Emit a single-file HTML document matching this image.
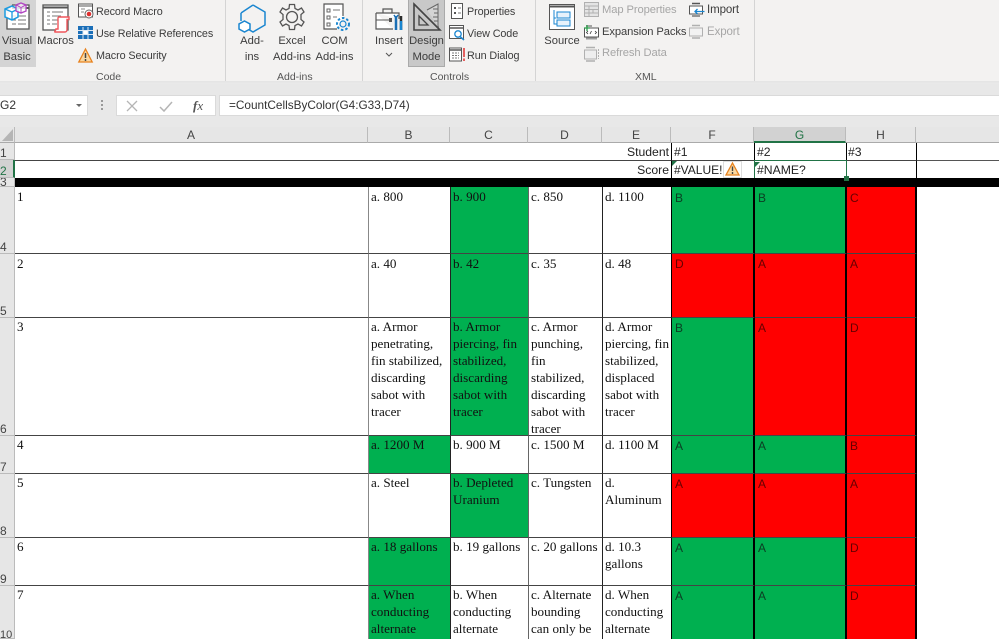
<!DOCTYPE html>
<html><head><meta charset="utf-8">
<style>
html,body{margin:0;padding:0;width:999px;height:639px;overflow:hidden;background:#fff}
body{position:relative;font-family:"Liberation Sans",sans-serif;color:#333}
.a{position:absolute;white-space:nowrap}
.rb{font-size:11.2px;line-height:15px;color:#3c3c3c;text-align:center;position:absolute;white-space:nowrap}
.sm{font-size:10.8px;letter-spacing:-.1px;line-height:14px;color:#3c3c3c;position:absolute;white-space:nowrap}
.dis{color:#a6a6a6}
.gl{font-size:10.5px;color:#555;position:absolute;line-height:13px;white-space:nowrap}
.sep{position:absolute;top:0;width:1px;height:81px;background:#d4d4d4}
.c{position:absolute;box-sizing:border-box;font-family:"Liberation Serif",serif;font-size:13.1px;line-height:17px;color:#111;padding:0 0 0 2px;overflow:hidden;white-space:pre;border-right:1px solid #222;border-bottom:1px solid #444}
.t{padding-top:1px}
.ca{border-right-color:#888}
.cc{border-right-color:#666}
.s{position:absolute;box-sizing:border-box;font-family:"Liberation Sans",sans-serif;font-size:12px;line-height:14px;padding:3px 0 0 3px;overflow:hidden;border-right:2px solid #000;border-bottom:1px solid #444;color:#0b3d22}
.g{background:#00b050}
.r{background:#f00;color:#660000}
.hd{position:absolute;top:127px;height:16px;background:#e6e6e6;border-right:1px solid #bbb;box-sizing:border-box;text-align:center;font-size:12px;line-height:17px;color:#444;border-bottom:1px solid #aaa}
.rh{position:absolute;left:0;width:15px;background:#e6e6e6;box-sizing:border-box;border-bottom:1px solid #bbb;font-size:12px;color:#444;overflow:hidden;border-right:1px solid #bbb}
.rh span{position:absolute;left:0;bottom:-1px;line-height:14px}
.sc{position:absolute;box-sizing:border-box;font-size:12.2px;line-height:16px;color:#222;border-bottom:1px solid #444;border-right:1px solid #000;height:18px;padding:1px 2px 0 2px;white-space:nowrap}
svg{position:absolute;overflow:visible}
</style></head><body>

<!-- ribbon -->
<div class="a" style="left:0;top:0;width:999px;height:84px;background:#f3f2f1"></div>
<div class="a" style="left:0;top:81px;width:999px;height:4px;background:linear-gradient(#e4e4e4,#ececec)"></div>
<div class="a" style="left:0;top:84px;width:999px;height:43px;background:#e8e8e8"></div>
<div class="a" style="left:0;top:0;width:36px;height:67px;background:#d4d4d4"></div>
<div class="a" style="left:408px;top:0;width:37px;height:67px;background:#c8c8c8;border:1px solid #aaa;box-sizing:border-box;border-top:0"></div>
<div class="sep" style="left:225px"></div>
<div class="sep" style="left:362px"></div>
<div class="sep" style="left:535px"></div>
<div class="sep" style="left:754px"></div>

<!-- Visual Basic icon -->
<svg style="left:2px;top:2px" width="30" height="30" viewBox="0 0 30 30">
<path d="M10 3H27V27H5V16" fill="#fff" stroke="#555" stroke-width="1.3"/><path d="M10 6H27" stroke="#555" stroke-width="2"/>
<path d="M10 14H14M16 14H24M10 18H14M16 18H24M10 22H14M16 22H24" stroke="#777"/>
<path d="M3 7L10 4L16 7V15L10 18L3 15Z" fill="#fff" fill-opacity=".8" stroke="#1d9be0" stroke-width="1.5"/><path d="M3 7L10 10L16 7M10 10V18" fill="none" stroke="#1d9be0" stroke-width="1.3"/>
<path d="M14 3L19 1L24 3V9L19 11L14 9Z" fill="#fff" fill-opacity=".8" stroke="#b146c2" stroke-width="1.3"/><path d="M14 3L19 5.5L24 3M19 5.5V11" fill="none" stroke="#b146c2"/>
</svg>
<div class="rb" style="left:0;top:34px;width:34px;">Visual<br><span style="line-height:16px">Basic</span></div>
<!-- Macros icon -->
<svg style="left:41px;top:3px" width="30" height="30" viewBox="0 0 30 30">
<rect x="2" y="2" width="25" height="25" fill="#fff" stroke="#555" stroke-width="1.3"/><path d="M2 4.500H27" stroke="#555" stroke-width="2"/>
<path d="M6 9H9M11 9H22M6 13H9M11 13H20M6 17H9M11 17H18M6 21H9M11 21H16" stroke="#777"/>
<path d="M18 14H28V16.500H26V27C26 28 25 29 24 29H14C13 29 15 27 15 26H17V15C17 14.500 17.500 14 18 14Z" fill="#fff" stroke="#f0565b" stroke-width="1.4"/>
</svg>
<div class="rb" style="left:37px;top:34px;width:37px">Macros</div>
<!-- Code small icons -->
<svg style="left:78px;top:3px" width="16" height="16" viewBox="0 0 16 16"><rect x=".5" y="1" width="14" height="13" fill="#fff" stroke="#555"/><path d="M.5 3H14.500" stroke="#555"/><path d="M3 6H7M3 9H6" stroke="#888"/><circle cx="11" cy="11" r="4" fill="#fff" stroke="#666"/><circle cx="11" cy="11" r="2.300" fill="#e03030"/></svg>
<svg style="left:78px;top:26px" width="15" height="14" viewBox="0 0 15 14"><rect width="15" height="13" fill="#1b6fb8"/><path d="M5 1V13M10 1V13M0 4.500H15M0 8.500H15" stroke="#dfe9f3"/><rect x="5.500" y="5" width="4" height="3" fill="#fff"/></svg>
<svg style="left:78px;top:48px" width="15" height="15" viewBox="0 0 15 15"><path d="M7.500 1L14.200 14H.8Z" fill="#fad7a0" stroke="#e8821e" stroke-width="1.300"/><path d="M7.500 5V10M7.500 11V13" stroke="#444" stroke-width="1.500"/></svg>
<div class="sm" style="left:96px;top:5px">Record Macro</div>
<div class="sm" style="left:96px;top:27px;">Use Relative References</div>
<div class="sm" style="left:96px;top:49px">Macro Security</div>
<div class="gl" style="left:96px;top:71px">Code</div>

<!-- Add-ins -->
<svg style="left:237px;top:3px" width="30" height="30" viewBox="0 0 30 30"><path d="M16 2L28 9V22L16 29L10 25.500" fill="none" stroke="#1a86d0" stroke-width="1.500"/><path d="M4 10L16 2M4 10V18" fill="none" stroke="#1a86d0" stroke-width="1.500"/><path d="M7.500 18L13 21V26L7.500 29L2 26V21Z" fill="#fff" stroke="#1a86d0" stroke-width="1.500"/></svg>
<div class="rb" style="left:235px;top:34px;width:34px">Add-<br><span style="line-height:16px">ins</span></div>
<svg style="left:278px;top:3px" width="28" height="28" viewBox="0 0 28 28"><circle cx="14" cy="14" r="5.500" fill="none" stroke="#555" stroke-width="1.300"/><path d="M11.500 1.500H16.500L17 5.500L20 7L23.500 5L26 9L23 11.500V16.500L26 19L23.500 23L20 21L17 22.500L16.500 26.500H11.500L11 22.500L8 21L4.500 23L2 19L5 16.500V11.500L2 9L4.500 5L8 7L11 5.500Z" fill="none" stroke="#555" stroke-width="1.300"/></svg>
<div class="rb" style="left:272px;top:34px;width:40px">Excel<br><span style="line-height:16px">Add-ins</span></div>
<svg style="left:323px;top:3px" width="28" height="30" viewBox="0 0 28 30"><path d="M14 26H1V1H20V13" fill="#fff" stroke="#555" stroke-width="1.200"/><path d="M4 6h3v3h-3zM4 13h3v3h-3zM4 20h3v3h-3z" fill="none" stroke="#666"/><path d="M10 7H17M10 14H14" stroke="#777"/><circle cx="20" cy="21" r="3" fill="none" stroke="#1a86d0" stroke-width="1.200"/><circle cx="20" cy="21" r="6" fill="none" stroke="#1a86d0" stroke-width="2" stroke-dasharray="2.500 2"/></svg>
<div class="rb" style="left:314px;top:34px;width:41px">COM<br><span style="line-height:16px">Add-ins</span></div>
<div class="gl" style="left:277px;top:71px">Add-ins</div>

<!-- Controls -->
<svg style="left:375px;top:6px" width="28" height="26" viewBox="0 0 28 26"><path d="M1 7H24V13M1 7V23H18" fill="#fff" stroke="#555" stroke-width="1.200"/><path d="M8 7V3H17V7" fill="none" stroke="#555" stroke-width="1.200"/><path d="M1 14H14" stroke="#555"/><rect x="14" y="12" width="3" height="4" fill="#555"/><path d="M21 10V24" stroke="#1a6fb5" stroke-width="2.500"/><path d="M19 9L21 12L23 9" fill="none" stroke="#1a6fb5" stroke-width="1.500"/><path d="M26 10V24" stroke="#2b2b2b" stroke-width="2.500"/><path d="M26 15V24" stroke="#1a86d0" stroke-width="2.500"/></svg>
<div class="rb" style="left:371px;top:34px;width:36px">Insert</div>
<svg style="left:385px;top:52px" width="8" height="5" viewBox="0 0 8 5"><path d="M1 1L4 4L7 1" fill="none" stroke="#555"/></svg>
<svg style="left:413px;top:3px" width="28" height="28" viewBox="0 0 28 28"><path d="M1 1L27 27H1Z" fill="none" stroke="#444" stroke-width="1.600"/><path d="M6 13L15 22H6Z" fill="none" stroke="#444" stroke-width="1.300"/><path d="M14 7L25 1V24H26" fill="#d4d4d4" stroke="#666"/><path d="M20 6H25M21 10H25M20 14H25M21 18H25" stroke="#666"/></svg>
<div class="rb" style="left:408px;top:34px;width:37px">Design<br><span style="line-height:16px">Mode</span></div>
<svg style="left:451px;top:3px" width="13" height="16" viewBox="0 0 13 16"><rect x=".5" y=".5" width="11" height="15" fill="#fff" stroke="#555"/><path d="M3 4h2v2h-2zM3 9h2v2h-2z" fill="#555"/><path d="M7 5H10M7 10H10" stroke="#777"/></svg>
<svg style="left:449px;top:25px" width="16" height="16" viewBox="0 0 16 16"><rect x=".5" y=".5" width="14" height="13" fill="#fff" stroke="#555"/><path d="M.5 3H14.500" stroke="#555" stroke-width="1.500"/><circle cx="9" cy="9" r="3.200" fill="#fff" stroke="#1a86d0" stroke-width="1.300"/><path d="M11 11.500L15 15" stroke="#1a86d0" stroke-width="1.500"/></svg>
<svg style="left:449px;top:47px" width="16" height="16" viewBox="0 0 16 16"><rect x=".5" y="1" width="12" height="13" fill="#fff" stroke="#555"/><path d="M.5 3H12.500" stroke="#555" stroke-width="1.500"/><path d="M3 6H10M3 8.500H10M3 11H10" stroke="#777" stroke-dasharray="2 1"/><path d="M15 1V10M15 11.500V14" stroke="#e03030" stroke-width="1.500"/></svg>
<div class="sm" style="left:467px;top:5px">Properties</div>
<div class="sm" style="left:467px;top:27px">View Code</div>
<div class="sm" style="left:467px;top:49px">Run Dialog</div>
<div class="gl" style="left:430px;top:71px">Controls</div>

<!-- XML -->
<svg style="left:549px;top:4px" width="27" height="27" viewBox="0 0 27 27"><rect x=".5" y=".5" width="25" height="25" fill="#fff" stroke="#555"/><path d="M.5 2.500H25.500" stroke="#555" stroke-width="2"/><path d="M5 6V14H7M5 14V20H8" fill="none" stroke="#1a86d0"/><rect x="8" y="8" width="13" height="6" fill="#e7f2fb" stroke="#1a86d0"/><rect x="8" y="16" width="13" height="6" fill="#e7f2fb" stroke="#1a86d0"/></svg>
<div class="rb" style="left:543px;top:34px;width:38px">Source</div>
<svg style="left:584px;top:2px" width="15" height="15" viewBox="0 0 15 15"><rect x=".5" y=".5" width="14" height="14" fill="#e4e4e4" stroke="#b0b0b0"/><path d="M.5 4H14.500M.5 7.500H14.500M.5 11H14.500M5 4V15M9 7V11" stroke="#b0b0b0"/></svg>
<svg style="left:584px;top:24px" width="15" height="16" viewBox="0 0 15 16"><rect x=".5" y="4" width="14" height="9" fill="#fff" stroke="#555"/><path d="M2 2H8" stroke="#555"/><path d="M3 1V7M0 4H6" stroke="#2a9d4a" stroke-width="1.300"/><path d="M2 14.500H13" stroke="#999" stroke-width="2"/><path d="M4 7L2.500 8.500L4 10M6 10L7.500 7M11 7L12.500 8.500L11 10" fill="none" stroke="#333" stroke-width=".8"/></svg>
<svg style="left:584px;top:46px" width="15" height="16" viewBox="0 0 15 16"><rect x=".5" y="4" width="12" height="9" fill="#eee" stroke="#b0b0b0"/><path d="M2 1.500H11M2 15H11" stroke="#b0b0b0" stroke-width="1.500"/><path d="M14.500 3V13" stroke="#b0b0b0" stroke-dasharray="2 1"/></svg>
<div class="sm dis" style="left:602px;top:3px;font-size:11.2px">Map Properties</div>
<div class="sm" style="left:602px;top:25px;font-size:11.2px">Expansion Packs</div>
<div class="sm dis" style="left:602px;top:46px;font-size:11.2px">Refresh Data</div>
<svg style="left:689px;top:2px" width="16" height="16" viewBox="0 0 16 16"><rect x=".5" y="4" width="13" height="8" fill="#fff" stroke="#555"/><path d="M3 1.500H11" stroke="#555" stroke-width="1.500"/><path d="M3 14H11" stroke="#777" stroke-width="1.500"/><path d="M15.500 9.500H6M8.500 7L6 9.500L8.500 12" fill="none" stroke="#1a86d0" stroke-width="1.300"/></svg>
<svg style="left:689px;top:24px" width="16" height="16" viewBox="0 0 16 16"><rect x=".5" y="4" width="13" height="8" fill="#f2f2f2" stroke="#b0b0b0"/><path d="M3 1.500H11M3 14H11" stroke="#b0b0b0" stroke-width="1.500"/></svg>
<div class="sm" style="left:707px;top:3px;font-size:11.5px">Import</div>
<div class="sm dis" style="left:707px;top:25px;font-size:11.5px">Export</div>
<div class="gl" style="left:635px;top:71px">XML</div>

<!-- formula bar -->
<div class="a" style="left:0;top:95px;width:88px;height:21px;background:#fff;border:1px solid #dadada;border-left:0;box-sizing:border-box;font-size:12px;line-height:19px;color:#333;">G2</div>
<svg style="left:75px;top:103px" width="8" height="5" viewBox="0 0 8 5"><path d="M1 1H7L4 4Z" fill="#666"/></svg>
<div class="a" style="left:101px;top:100px;width:2px;height:2px;background:#999;box-shadow:0 4px #999,0 8px #999"></div>
<div class="a" style="left:116px;top:95px;width:100px;height:21px;background:#fff;border:1px solid #dadada;box-sizing:border-box"></div>
<svg style="left:126px;top:100px" width="12" height="12" viewBox="0 0 12 12"><path d="M1 1L11 11M11 1L1 11" stroke="#b5b5b5" stroke-width="1.300"/></svg>
<svg style="left:159px;top:101px" width="14" height="11" viewBox="0 0 14 11"><path d="M1 6L5 10L13 1" fill="none" stroke="#b5b5b5" stroke-width="1.500"/></svg>
<div class="a" style="left:193px;top:97px;font:italic 13px 'Liberation Serif',serif;color:#555;line-height:17px"><b>f</b>x</div>
<div class="a" style="left:219px;top:95px;width:780px;height:21px;background:#fff;border:1px solid #dadada;border-right:0;box-sizing:border-box;font-size:11.8px;line-height:19px;color:#333;padding-left:9px">=CountCellsByColor(G4:G33,D74)</div>

<!-- grid bg -->
<div class="a" style="left:15px;top:143px;width:984px;height:496px;background:#fff"></div>
<div class="a" style="left:0;top:127px;width:15px;height:16px;background:#e6e6e6;border-bottom:1px solid #aaa;box-sizing:border-box;border-right:1px solid #bbb"></div>
<svg style="left:2px;top:129px" width="12" height="12" viewBox="0 0 12 12"><path d="M11 0V12H0Z" fill="#b5b5b5"/></svg>

<!-- col headers -->
<div class="hd" style="left:15px;width:353px">A</div>
<div class="hd" style="left:368px;width:82px">B</div>
<div class="hd" style="left:450px;width:78px">C</div>
<div class="hd" style="left:528px;width:74px">D</div>
<div class="hd" style="left:602px;width:69px">E</div>
<div class="hd" style="left:671px;width:83px">F</div>
<div class="hd" style="left:754px;width:92px;background:#d2d2d2;color:#217346;border-bottom:2px solid #217346">G</div>
<div class="hd" style="left:846px;width:70px">H</div>
<div class="hd" style="left:916px;width:83px;border-right:0"></div>

<!-- row headers -->
<div class="rh" style="top:143px;height:17px"><span>1</span></div>
<div class="rh" style="top:160px;height:18px;background:#d2d2d2;color:#217346;border-right:2px solid #217346"><span>2</span></div>
<div class="rh" style="top:178px;height:9px"><span style="bottom:-3px">3</span></div>
<div class="rh" style="top:187px;height:67px"><span>4</span></div>
<div class="rh" style="top:254px;height:64px"><span>5</span></div>
<div class="rh" style="top:318px;height:118px"><span>6</span></div>
<div class="rh" style="top:436px;height:38px"><span>7</span></div>
<div class="rh" style="top:474px;height:64px"><span>8</span></div>
<div class="rh" style="top:538px;height:48px"><span>9</span></div>
<div class="rh" style="top:586px;height:53px"><span style="bottom:-4px;font-size:11px">10</span></div>

<!-- rows 1-3 -->
<div class="sc" style="left:15px;top:143px;width:656px;height:18px;text-align:right;padding-right:2px;border-right:0">Student</div>
<div class="sc" style="left:671px;top:143px;width:84px;border-left:1px solid #000;padding-left:2px">#1</div>
<div class="sc" style="left:755px;top:143px;width:92px;">#2</div>
<div class="sc" style="left:847px;top:143px;width:70px;padding-left:1px">#3</div>
<div class="a" style="left:917px;top:160px;width:82px;height:1px;background:#555"></div>
<div class="sc" style="left:15px;top:161px;width:656px;height:17px;text-align:right;padding:1px 2px 0 0;border-right:0;border-bottom:0">Score</div>
<div class="sc" style="left:671px;top:161px;width:84px;height:17px;border-left:1px solid #000;border-bottom:0;padding:1px 0 0 2px;font-size:12px">#VALUE!</div>
<div class="sc" style="left:847px;top:161px;width:70px;height:17px;border-bottom:0"></div>
<div class="sc" style="left:754px;top:160px;width:93px;height:19px;border:1.500px solid #217346;padding:1px 0 0 2px;background:#fff">#NAME?</div>
<div class="a" style="left:844px;top:176px;width:5px;height:5px;background:#217346;z-index:3"></div>
<svg style="left:672px;top:161px" width="5" height="5"><path d="M0 0H5L0 5Z" fill="#217346"/></svg>
<svg style="left:755px;top:162px" width="5" height="5"><path d="M0 0H5L0 5Z" fill="#217346"/></svg>
<div class="a" style="left:723px;top:161px;width:19px;height:17px;background:#fff;border:1px solid #ddd;box-sizing:border-box"></div>
<svg style="left:725px;top:162px" width="15" height="14" viewBox="0 0 15 14"><path d="M7.500 1L14 13H1Z" fill="#fbd8a0" stroke="#e8821e" stroke-width="1.300"/><path d="M7.500 4.500V9M7.500 10V12" stroke="#444" stroke-width="1.400"/></svg>
<div class="a" style="left:15px;top:178px;width:984px;height:9px;background:#000"></div>

<!-- row 4 -->
<div class="c ca t" style="left:15px;top:187px;width:354px;height:67px">1</div>
<div class="c t" style="left:369px;top:187px;width:82px;height:67px">a. 800</div>
<div class="c cc g t" style="left:451px;top:187px;width:78px;height:67px">b. 900</div>
<div class="c t" style="left:529px;top:187px;width:74px;height:67px">c. 850</div>
<div class="c t" style="left:603px;top:187px;width:69px;height:67px">d. 1100</div>
<div class="s g" style="left:671px;top:187px;width:84px;height:67px;border-left:1px solid #000;padding-top:4px">B</div>
<div class="s g" style="left:755px;top:187px;width:92px;height:67px;padding-top:4px">B</div>
<div class="s r" style="left:847px;top:187px;width:70px;height:67px;padding-top:4px">C</div>
<!-- row 5 -->
<div class="c ca t" style="left:15px;top:254px;width:354px;height:64px">2</div>
<div class="c t" style="left:369px;top:254px;width:82px;height:64px">a. 40</div>
<div class="c cc g t" style="left:451px;top:254px;width:78px;height:64px">b. 42</div>
<div class="c t" style="left:529px;top:254px;width:74px;height:64px">c. 35</div>
<div class="c t" style="left:603px;top:254px;width:69px;height:64px">d. 48</div>
<div class="s r" style="left:671px;top:254px;width:84px;height:64px;border-left:1px solid #000">D</div>
<div class="s r" style="left:755px;top:254px;width:92px;height:64px">A</div>
<div class="s r" style="left:847px;top:254px;width:70px;height:64px">A</div>
<!-- row 6 -->
<div class="c ca" style="left:15px;top:318px;width:354px;height:118px">3</div>
<div class="c" style="left:369px;top:318px;width:82px;height:118px">a. Armor
penetrating,
fin stabilized,
discarding
sabot with
tracer</div>
<div class="c cc g" style="left:451px;top:318px;width:78px;height:118px">b. Armor
piercing, fin
stabilized,
discarding
sabot with
tracer</div>
<div class="c" style="left:529px;top:318px;width:74px;height:118px">c. Armor
punching,
fin
stabilized,
discarding
sabot with
tracer</div>
<div class="c" style="left:603px;top:318px;width:69px;height:118px">d. Armor
piercing, fin
stabilized,
displaced
sabot with
tracer</div>
<div class="s g" style="left:671px;top:318px;width:84px;height:118px;border-left:1px solid #000">B</div>
<div class="s r" style="left:755px;top:318px;width:92px;height:118px">A</div>
<div class="s r" style="left:847px;top:318px;width:70px;height:118px">D</div>
<!-- row 7 -->
<div class="c ca" style="left:15px;top:436px;width:354px;height:38px">4</div>
<div class="c g" style="left:369px;top:436px;width:82px;height:38px">a. 1200 M</div>
<div class="c cc" style="left:451px;top:436px;width:78px;height:38px">b. 900 M</div>
<div class="c" style="left:529px;top:436px;width:74px;height:38px">c. 1500 M</div>
<div class="c" style="left:603px;top:436px;width:69px;height:38px">d. 1100 M</div>
<div class="s g" style="left:671px;top:436px;width:84px;height:38px;border-left:1px solid #000">A</div>
<div class="s g" style="left:755px;top:436px;width:92px;height:38px">A</div>
<div class="s r" style="left:847px;top:436px;width:70px;height:38px">B</div>
<!-- row 8 -->
<div class="c ca" style="left:15px;top:474px;width:354px;height:64px">5</div>
<div class="c" style="left:369px;top:474px;width:82px;height:64px">a. Steel</div>
<div class="c cc g" style="left:451px;top:474px;width:78px;height:64px">b. Depleted
Uranium</div>
<div class="c" style="left:529px;top:474px;width:74px;height:64px">c. Tungsten</div>
<div class="c" style="left:603px;top:474px;width:69px;height:64px">d.
Aluminum</div>
<div class="s r" style="left:671px;top:474px;width:84px;height:64px;border-left:1px solid #000">A</div>
<div class="s r" style="left:755px;top:474px;width:92px;height:64px">A</div>
<div class="s r" style="left:847px;top:474px;width:70px;height:64px">A</div>
<!-- row 9 -->
<div class="c ca" style="left:15px;top:538px;width:354px;height:48px">6</div>
<div class="c g" style="left:369px;top:538px;width:82px;height:48px">a. 18 gallons</div>
<div class="c cc" style="left:451px;top:538px;width:78px;height:48px">b. 19 gallons</div>
<div class="c" style="left:529px;top:538px;width:74px;height:48px">c. 20 gallons</div>
<div class="c" style="left:603px;top:538px;width:69px;height:48px">d. 10.3
gallons</div>
<div class="s g" style="left:671px;top:538px;width:84px;height:48px;border-left:1px solid #000">A</div>
<div class="s g" style="left:755px;top:538px;width:92px;height:48px">A</div>
<div class="s r" style="left:847px;top:538px;width:70px;height:48px">D</div>
<!-- row 10 -->
<div class="c ca" style="left:15px;top:586px;width:354px;height:54px;border-bottom:0">7</div>
<div class="c g" style="left:369px;top:586px;width:82px;height:54px;border-bottom:0">a. When
conducting
alternate</div>
<div class="c cc" style="left:451px;top:586px;width:78px;height:54px;border-bottom:0">b. When
conducting
alternate</div>
<div class="c" style="left:529px;top:586px;width:74px;height:54px;border-bottom:0">c. Alternate
bounding
can only be</div>
<div class="c" style="left:603px;top:586px;width:69px;height:54px;border-bottom:0">d. When
conducting
alternate</div>
<div class="s g" style="left:671px;top:586px;width:84px;height:54px;border-left:1px solid #000;border-bottom:0">A</div>
<div class="s g" style="left:755px;top:586px;width:92px;height:54px;border-bottom:0">A</div>
<div class="s r" style="left:847px;top:586px;width:70px;height:54px;border-bottom:0">D</div>

</body></html>
